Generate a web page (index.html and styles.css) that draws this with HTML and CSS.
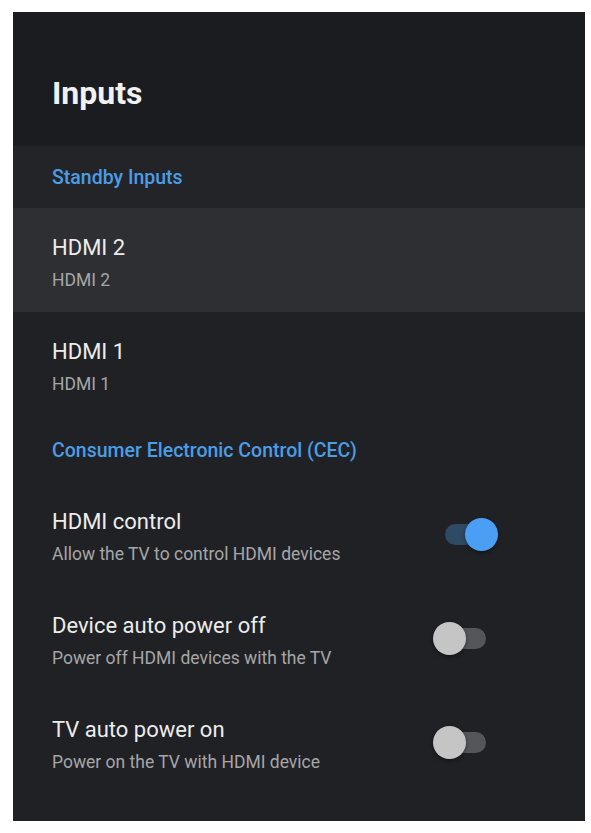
FILE: index.html
```html
<!DOCTYPE html>
<html lang="en">
<head>
<meta charset="utf-8">
<title>Inputs</title>
<link rel="stylesheet" href="styles.css">
</head>
<body>
<main class="panel">
  <header class="page-header">
    <h1 class="page-title">Inputs</h1>
  </header>

  <section class="group">
    <h2 class="group-title">Standby Inputs</h2>
    <div class="item item--focused">
      <div class="item-text">
        <div class="item-title">HDMI 2</div>
        <div class="item-sub">HDMI 2</div>
      </div>
    </div>
    <div class="item">
      <div class="item-text">
        <div class="item-title">HDMI 1</div>
        <div class="item-sub">HDMI 1</div>
      </div>
    </div>
  </section>

  <section class="group">
    <h2 class="group-title group-title--plain">Consumer Electronic Control (CEC)</h2>
    <div class="item">
      <div class="item-text">
        <div class="item-title">HDMI control</div>
        <div class="item-sub">Allow the TV to control HDMI devices</div>
      </div>
      <span class="switch switch--on"><span class="switch-track"></span><span class="switch-thumb"></span></span>
    </div>
    <div class="item">
      <div class="item-text">
        <div class="item-title">Device auto power off</div>
        <div class="item-sub">Power off HDMI devices with the TV</div>
      </div>
      <span class="switch"><span class="switch-track"></span><span class="switch-thumb"></span></span>
    </div>
    <div class="item">
      <div class="item-text">
        <div class="item-title">TV auto power on</div>
        <div class="item-sub">Power on the TV with HDMI device</div>
      </div>
      <span class="switch"><span class="switch-track"></span><span class="switch-thumb"></span></span>
    </div>
  </section>
</main>
</body>
</html>
```

FILE: styles.css
```css
* { box-sizing: border-box; }

html, body {
  margin: 0;
  padding: 0;
  background: #ffffff;
}

body {
  font-family: Roboto, "Liberation Sans", sans-serif;
  padding: 12px 0 0 13px;
}

.panel {
  width: 572px;
  height: 809px;
  background: #202125;
  display: flex;
  flex-direction: column;
}

.page-header {
  height: 134px;
  background: #1b1c1f;
  padding: 62px 0 0 39px;
}

.page-title {
  margin: 0;
  font-size: 32px;
  line-height: 38px;
  font-weight: 700;
  color: #f1f1f1;
}

.group {
  display: flex;
  flex-direction: column;
}

.group-title {
  margin: 0;
  height: 62px;
  padding: 20px 0 0 39px;
  font-size: 19.5px;
  line-height: 24px;
  font-weight: 500;
  color: #4b9de6;
  background: #232428;
}

.group-title--plain {
  height: 66px;
  padding-top: 23px;
  background: transparent;
}

.item {
  height: 104px;
  padding: 0 87px 0 39px;
  display: flex;
  align-items: flex-start;
  justify-content: space-between;
}

.item--focused {
  background: #2e2f33;
}

.item-text {
  margin-top: 27px;
  display: flex;
  flex-direction: column;
  gap: 9px;
}

.item-title {
  font-size: 22px;
  line-height: 26px;
  color: #ececec;
}

.item-sub {
  font-size: 17.5px;
  line-height: 20px;
  color: #a6a6a8;
}

.switch {
  position: relative;
  align-self: center;
  width: 65px;
  height: 33px;
  flex: none;
}

.switch-track {
  position: absolute;
  left: 12px;
  top: 6px;
  width: 41px;
  height: 21px;
  border-radius: 11px;
  background: #55565a;
}

.switch-thumb {
  position: absolute;
  left: 0;
  top: 0;
  width: 33px;
  height: 33px;
  border-radius: 50%;
  background: #c5c5c6;
  box-shadow: 0 2px 4px rgba(0, 0, 0, 0.35);
}

.switch--on .switch-track {
  background: #2f4a64;
}

.switch--on .switch-thumb {
  left: 32px;
  background: #4a9ff5;
}
```
